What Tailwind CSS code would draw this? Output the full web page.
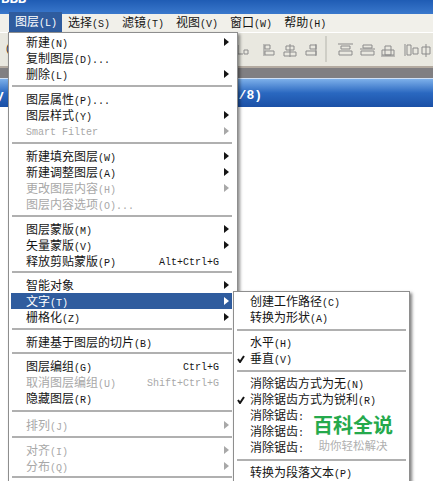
<!DOCTYPE html>
<html lang="zh">
<head>
    <meta charset="UTF-8">
    <title>图层菜单</title>
    <script src="https://cdn.jsdelivr.net/npm/@tailwindcss/browser@4"></script>
</head>
<body class="bg-white">
<div class="relative w-[433px] h-[481px] overflow-hidden bg-white text-[12px] leading-4 text-[#151515] font-['Liberation_Mono','Noto_Sans_CJK_SC',monospace]">

    <!-- App title bar -->
    <div class="h-[14px] overflow-hidden bg-gradient-to-b from-[#1f5cb4] to-[#3a78cc]">
        <div class="-mt-[9px] pl-[1px] text-[14px] font-bold text-white">BBB</div>
    </div>

    <!-- Menu bar -->
    <div class="flex h-[18px] items-center gap-[12px] bg-[#f1f0ea] pl-[9px]">
        <span class="-mr-[6px] -mt-[2px] h-[20px] w-[53px] bg-[#2f5c9e] pl-[6px] pt-[3px] text-white">图层<span class="text-[10px]">(L)</span></span>
        <span class="translate-y-px">选择<span class="text-[10px]">(S)</span></span>
        <span class="translate-y-px">滤镜<span class="text-[10px]">(T)</span></span>
        <span class="translate-y-px">视图<span class="text-[10px]">(V)</span></span>
        <span class="translate-y-px">窗口<span class="text-[10px]">(W)</span></span>
        <span class="translate-y-px">帮助<span class="text-[10px]">(H)</span></span>
    </div>

    <!-- Options toolbar -->
    <div class="flex h-[34px] items-center border-t border-white bg-[#e9e8e0] pl-[5px] text-[10px]">
        <span>(</span>
        <svg width="422" height="33" viewBox="11 33 422 33" fill="none" stroke="#8c8c8c">
            <path d="M238 45v9h5M244 50h4v4h-4zM264 44v12M265 45h5v4h-5zM265 51h9v4h-9zM290 44v13M286 46h8v4h-8zM284 52h12v4h-12zM316 44v12M310 45h6v4h-6zM306 51h10v4h-10z"/>
            <path d="M326 36v26" stroke="#b5b4ac"/>
            <path d="M338 44h15M341 46h9v3h-9zM339 51h13v4h-13zM360 49h15M363 45h9v3h-9zM361 51h13v4h-13zM381 56h14M385 46h6v9h-6zM382 50h12v5h-12z"/>
            <path d="M405 44v12M407 45h4v10h-4zM413 48h5v6h-5zM426 44v13M422 47h8v7h-8z"/>
        </svg>
    </div>

    <!-- Gray strip under toolbar -->
    <div class="h-[12px] border-t-2 border-[#b3aaa0] bg-[#807f82]"></div>

    <!-- Document title bar -->
    <div class="flex h-[29px] items-center justify-between border-t border-[#cfe0f5] bg-gradient-to-b from-[#7db0ea] via-[#2a68c0] to-[#1b50a6] pt-[5px] pr-[171px] font-bold text-white">
        <span class="-ml-[4px] text-[13px]">y</span>
        <span class="text-[13px]">/8)</span>
    </div>

    <!-- Layer menu -->
    <div class="absolute left-[8px] top-[32px] h-[460px] w-[230px] border border-[#8e8e8e] bg-white pl-[2px] pr-[5px] pt-[1px] shadow-[2px_2px_3px_rgba(0,0,0,0.45)] [&>div>span]:translate-y-[2px] [&>div>div]:-translate-y-px">
        <div class="flex h-4 items-center justify-between pl-[15px] pr-[3px]"><span>新建<span class="text-[10px]">(N)</span></span><svg width="5" height="8" viewBox="0 0 5 8" fill="currentColor"><path d="M0 0l5 4-5 4z"/></svg></div>
        <div class="flex h-4 items-center justify-between pl-[15px] pr-[3px]"><span>复制图层<span class="text-[10px]">(D)...</span></span></div>
        <div class="flex h-4 items-center justify-between pl-[15px] pr-[3px]"><span>删除<span class="text-[10px]">(L)</span></span><svg width="5" height="8" viewBox="0 0 5 8" fill="currentColor"><path d="M0 0l5 4-5 4z"/></svg></div>
        <div class="flex h-[9px] items-center pl-[1px]"><div class="h-[2px] w-full bg-[#b0b0b0]"></div></div>
        <div class="flex h-4 items-center justify-between pl-[15px] pr-[3px]"><span>图层属性<span class="text-[10px]">(P)...</span></span></div>
        <div class="flex h-4 items-center justify-between pl-[15px] pr-[3px]"><span>图层样式<span class="text-[10px]">(Y)</span></span><svg width="5" height="8" viewBox="0 0 5 8" fill="currentColor"><path d="M0 0l5 4-5 4z"/></svg></div>
        <div class="flex h-4 items-center justify-between pl-[15px] pr-[3px] text-[#a8a8a8]"><span class="text-[10px]">Smart Filter</span><svg width="5" height="8" viewBox="0 0 5 8" fill="currentColor"><path d="M0 0l5 4-5 4z"/></svg></div>
        <div class="flex h-[9px] items-center pl-[1px]"><div class="h-[2px] w-full bg-[#b0b0b0]"></div></div>
        <div class="flex h-4 items-center justify-between pl-[15px] pr-[3px]"><span>新建填充图层<span class="text-[10px]">(W)</span></span><svg width="5" height="8" viewBox="0 0 5 8" fill="currentColor"><path d="M0 0l5 4-5 4z"/></svg></div>
        <div class="flex h-4 items-center justify-between pl-[15px] pr-[3px]"><span>新建调整图层<span class="text-[10px]">(A)</span></span><svg width="5" height="8" viewBox="0 0 5 8" fill="currentColor"><path d="M0 0l5 4-5 4z"/></svg></div>
        <div class="flex h-4 items-center justify-between pl-[15px] pr-[3px] text-[#a8a8a8]"><span>更改图层内容<span class="text-[10px]">(H)</span></span><svg width="5" height="8" viewBox="0 0 5 8" fill="currentColor"><path d="M0 0l5 4-5 4z"/></svg></div>
        <div class="flex h-4 items-center justify-between pl-[15px] pr-[3px] text-[#a8a8a8]"><span>图层内容选项<span class="text-[10px]">(O)...</span></span></div>
        <div class="flex h-[9px] items-center pl-[1px]"><div class="h-[2px] w-full bg-[#b0b0b0]"></div></div>
        <div class="flex h-4 items-center justify-between pl-[15px] pr-[3px]"><span>图层蒙版<span class="text-[10px]">(M)</span></span><svg width="5" height="8" viewBox="0 0 5 8" fill="currentColor"><path d="M0 0l5 4-5 4z"/></svg></div>
        <div class="flex h-4 items-center justify-between pl-[15px] pr-[3px]"><span>矢量蒙版<span class="text-[10px]">(V)</span></span><svg width="5" height="8" viewBox="0 0 5 8" fill="currentColor"><path d="M0 0l5 4-5 4z"/></svg></div>
        <div class="flex h-4 items-center justify-between pl-[15px] pr-[13px]"><span>释放剪贴蒙版<span class="text-[10px]">(P)</span></span><span class="text-[10px]">Alt+Ctrl+G</span></div>
        <div class="flex h-[8px] items-center pl-[1px]"><div class="h-[2px] w-full bg-[#b0b0b0]"></div></div>
        <div class="flex h-4 items-center justify-between pl-[15px] pr-[3px]"><span>智能对象</span><svg width="5" height="8" viewBox="0 0 5 8" fill="currentColor"><path d="M0 0l5 4-5 4z"/></svg></div>
        <div class="flex h-4 items-center justify-between bg-[#2f5c9e] pl-[15px] pr-[3px] text-white"><span>文字<span class="text-[10px]">(T)</span></span><svg width="5" height="8" viewBox="0 0 5 8" fill="currentColor"><path d="M0 0l5 4-5 4z"/></svg></div>
        <div class="flex h-4 items-center justify-between pl-[15px] pr-[3px]"><span>栅格化<span class="text-[10px]">(Z)</span></span><svg width="5" height="8" viewBox="0 0 5 8" fill="currentColor"><path d="M0 0l5 4-5 4z"/></svg></div>
        <div class="flex h-[9px] items-center pl-[1px]"><div class="h-[2px] w-full bg-[#b0b0b0]"></div></div>
        <div class="flex h-4 items-center justify-between pl-[15px] pr-[3px]"><span>新建基于图层的切片<span class="text-[10px]">(B)</span></span></div>
        <div class="flex h-[8px] items-center pl-[1px]"><div class="h-[2px] w-full bg-[#b0b0b0]"></div></div>
        <div class="flex h-4 items-center justify-between pl-[15px] pr-[13px]"><span>图层编组<span class="text-[10px]">(G)</span></span><span class="text-[10px]">Ctrl+G</span></div>
        <div class="flex h-4 items-center justify-between pl-[15px] pr-[13px] text-[#a8a8a8]"><span>取消图层编组<span class="text-[10px]">(U)</span></span><span class="text-[10px]">Shift+Ctrl+G</span></div>
        <div class="flex h-4 items-center justify-between pl-[15px] pr-[3px]"><span>隐藏图层<span class="text-[10px]">(R)</span></span></div>
        <div class="flex h-[11px] items-center pl-[1px]"><div class="h-[2px] w-full bg-[#b0b0b0]"></div></div>
        <div class="flex h-4 items-center justify-between pl-[15px] pr-[3px] text-[#a8a8a8]"><span>排列<span class="text-[10px]">(J)</span></span><svg width="5" height="8" viewBox="0 0 5 8" fill="currentColor"><path d="M0 0l5 4-5 4z"/></svg></div>
        <div class="flex h-[9px] items-center pl-[1px]"><div class="h-[2px] w-full bg-[#b0b0b0]"></div></div>
        <div class="flex h-4 items-center justify-between pl-[15px] pr-[3px] text-[#a8a8a8]"><span>对齐<span class="text-[10px]">(I)</span></span><svg width="5" height="8" viewBox="0 0 5 8" fill="currentColor"><path d="M0 0l5 4-5 4z"/></svg></div>
        <div class="flex h-4 items-center justify-between pl-[15px] pr-[3px] text-[#a8a8a8]"><span>分布<span class="text-[10px]">(Q)</span></span><svg width="5" height="8" viewBox="0 0 5 8" fill="currentColor"><path d="M0 0l5 4-5 4z"/></svg></div>
        <div class="flex h-[5px] items-end pl-[1px]"><div class="h-[2px] w-full bg-[#b0b0b0]"></div></div>
    </div>

    <!-- Text submenu -->
    <div class="absolute left-[233px] top-[291px] h-[200px] w-[177px] border border-[#8e8e8e] bg-white pl-[3px] pr-[3px] pt-[1px] shadow-[2px_2px_3px_rgba(0,0,0,0.5)] [&>div>span]:translate-y-[2px]">
        <div class="flex h-4 items-center pl-[13px]"><span>创建工作路径<span class="text-[10px]">(C)</span></span></div>
        <div class="flex h-4 items-center pl-[13px]"><span>转换为形状<span class="text-[10px]">(A)</span></span></div>
        <div class="flex h-[9px] items-center"><div class="h-[2px] w-full bg-[#b0b0b0]"></div></div>
        <div class="flex h-4 items-center pl-[13px]"><span>水平<span class="text-[10px]">(H)</span></span></div>
        <div class="relative flex h-4 items-center pl-[13px]"><svg class="absolute left-0 top-[5px]" width="8" height="8" viewBox="0 0 8 8" fill="none" stroke="currentColor" stroke-width="2"><path d="M1 4l2 3 4-6"/></svg><span>垂直<span class="text-[10px]">(V)</span></span></div>
        <div class="flex h-[9px] items-center"><div class="h-[2px] w-full bg-[#b0b0b0]"></div></div>
        <div class="flex h-4 items-center pl-[13px]"><span>消除锯齿方式为无<span class="text-[10px]">(N)</span></span></div>
        <div class="relative flex h-4 items-center pl-[13px]"><svg class="absolute left-0 top-[5px]" width="8" height="8" viewBox="0 0 8 8" fill="none" stroke="currentColor" stroke-width="2"><path d="M1 4l2 3 4-6"/></svg><span>消除锯齿方式为锐利<span class="text-[10px]">(R)</span></span></div>
        <div class="flex h-4 items-center pl-[13px]"><span>消除锯齿<span class="text-[10px]">:</span></span></div>
        <div class="flex h-4 items-center pl-[13px]"><span>消除锯齿<span class="text-[10px]">:</span></span></div>
        <div class="flex h-4 items-center pl-[13px]"><span>消除锯齿<span class="text-[10px]">:</span></span></div>
        <div class="flex h-[9px] items-center"><div class="h-[2px] w-full bg-[#b0b0b0]"></div></div>
        <div class="flex h-4 items-center pl-[13px]"><span>转换为段落文本<span class="text-[10px]">(P)</span></span></div>
    </div>

    <!-- Watermark -->
    <div class="absolute left-[313px] top-[412px] flex flex-col items-center font-['Noto_Sans_CJK_SC',sans-serif]">
        <span class="text-[20px] font-bold leading-[26px] text-[#25a94c]">百科全说</span>
        <span class="text-[11.5px] leading-[14px] text-[#b0b0b0]">助你轻松解决</span>
    </div>
</div>
</body>
</html>
